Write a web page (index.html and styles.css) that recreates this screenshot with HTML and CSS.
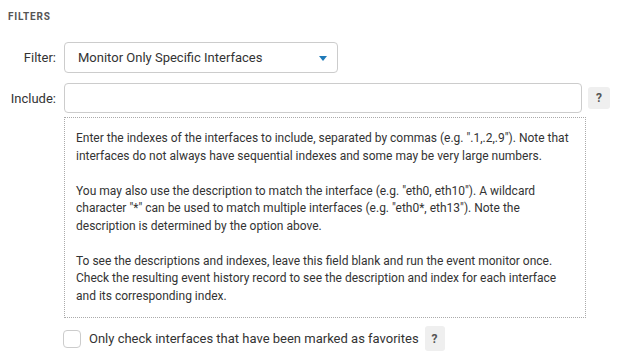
FILE: index.html
```html
<!DOCTYPE html>
<html lang="en">
<head>
    <meta charset="UTF-8">
    <title>Filters</title>
    <link rel="stylesheet" href="styles.css">
</head>
<body>

    <div class="panel">
        <h3 class="section-title">Filters</h3>

        <!-- filter type -->
        <div class="form-row">
            <label class="form-label">Filter:</label>
            <div class="select">
                <span>Monitor Only Specific Interfaces</span>
                <span class="caret"></span>
            </div>
        </div>

        <!-- include list -->
        <div class="form-row">
            <label class="form-label">Include:</label>
            <input type="text" class="text-input">
            <span class="help-btn">?</span>
        </div>

        <div class="form-row help-row">
            <span class="form-label"></span>
            <div class="help-box">
                <p>Enter the indexes of the interfaces to include, separated by commas (e.g. ".1,.2,.9"). Note that interfaces do not always have sequential indexes and some may be very large numbers.</p>
                <p>You may also use the description to match the interface (e.g. "eth0, eth10"). A wildcard character "*" can be used to match multiple interfaces (e.g. "eth0*, eth13"). Note the description is determined by the option above.</p>
                <p>To see the descriptions and indexes, leave this field blank and run the event monitor once. Check the resulting event history record to see the description and index for each interface and its corresponding index.</p>
            </div>
        </div>

        <div class="form-row check-row">
            <span class="form-label"></span>
            <span class="checkbox"></span>
            <span class="check-text">Only check interfaces that have been marked as favorites</span>
            <span class="help-btn tall">?</span>
        </div>
    </div>

</body>
</html>
```

FILE: styles.css
```css
body {
    margin: 0;
    padding: 8px;
    font-family: Roboto, "Noto Sans", sans-serif;
    font-size: 13px;
    color: #333;
    background: #fff;
}
.section-title {
    margin: 2px 0 18px;
    font-size: 10px;
    line-height: 14px;
    font-weight: bold;
    letter-spacing: 0.8px;
    text-transform: uppercase;
    color: #555;
}
.form-row {
    display: flex;
    align-items: center;
    margin-bottom: 10px;
}
.form-label {
    width: 48px;
    margin-right: 8px;
    text-align: right;
    flex-shrink: 0;
    color: #333;
}
.select {
    width: 274px;
    height: 31px;
    box-sizing: border-box;
    border: 1px solid #ccc;
    border-radius: 4px;
    padding: 0 10px 0 13px;
    display: flex;
    align-items: center;
    justify-content: space-between;
}
.caret {
    width: 0;
    height: 0;
    border-left: 4px solid transparent;
    border-right: 4px solid transparent;
    border-top: 5px solid #1f7ab8;
    margin-top: 1px;
}
.text-input {
    width: 518px;
    height: 30px;
    box-sizing: border-box;
    border: 1px solid #ccc;
    border-radius: 4px;
    margin: 0;
    font: inherit;
}
.help-btn {
    width: 22px;
    height: 22px;
    margin-left: 6px;
    border-radius: 3px;
    background: #efefef;
    color: #555;
    font-size: 12px;
    font-weight: bold;
    display: flex;
    align-items: center;
    justify-content: center;
}
.help-btn.tall {
    width: 20px;
    height: 25px;
}
.help-row {
    margin-top: -6px;
    margin-bottom: 8px;
}
.help-box {
    width: 522px;
    box-sizing: border-box;
    border: 1px dotted #aaa;
    padding: 12px 8px 12px 11px;
    font-size: 12px;
    line-height: 17.5px;
}
.help-box p {
    margin: 0 0 17.5px;
}
.help-box p:last-child {
    margin-bottom: 0;
}
.check-row .form-label {
    margin-right: 7px;
}
.checkbox {
    width: 18px;
    height: 18px;
    box-sizing: border-box;
    border: 1px solid #ccc;
    border-radius: 4px;
    margin-right: 8px;
}
.check-text {
    font-size: 13px;
}
```
